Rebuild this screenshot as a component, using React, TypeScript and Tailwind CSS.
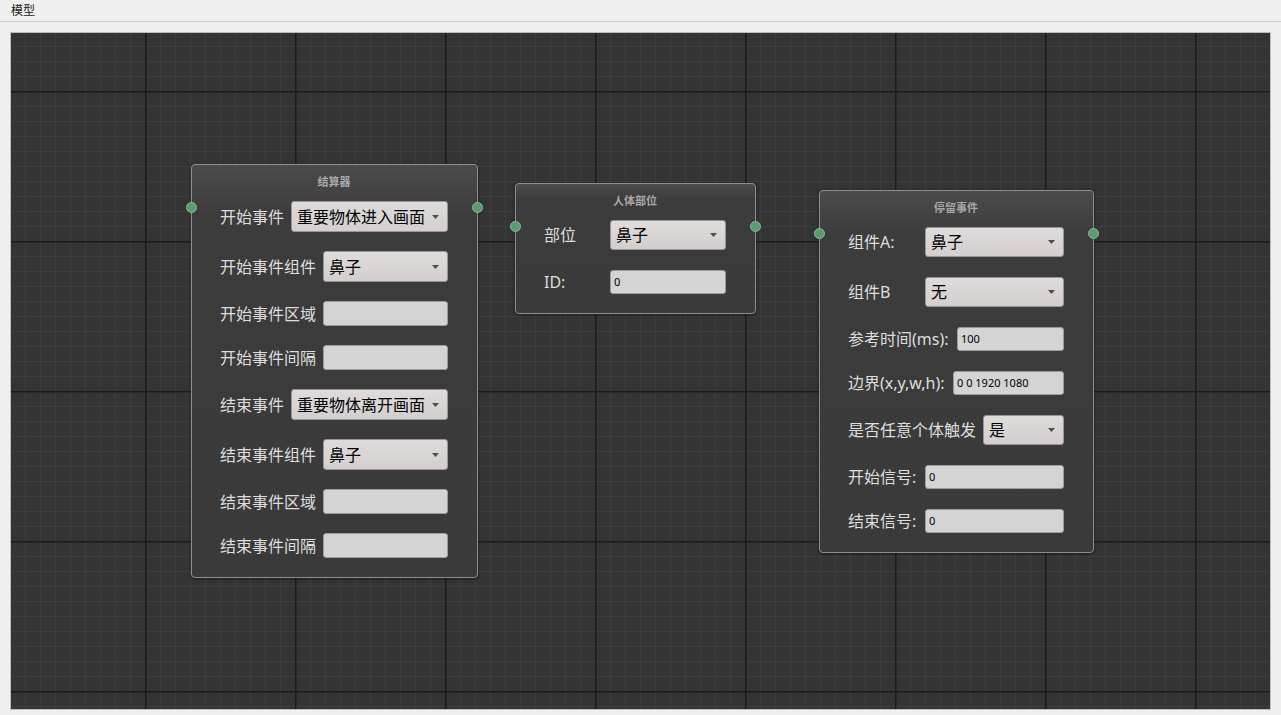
import React from "react";

const FONT = { fontFamily: '"Noto Sans", "Noto Sans CJK SC", sans-serif' };

type Field =
  | { kind: "combo"; label: string; value: string; w: string }
  | { kind: "input"; label: string; value: string; w: string };

type NodeDef = {
  title: string;
  pos: string;
  width: string;
  gap: string;
  comboH: string;
  inputH: string;
  fields: Field[];
};

const nodes: NodeDef[] = [
  {
    title: "结算器",
    pos: "left-[180px] top-[131px]",
    width: "w-[287px]",
    gap: "gap-[19px]",
    comboH: "h-[31px]",
    inputH: "h-[25px]",
    fields: [
      { kind: "combo", label: "开始事件", value: "重要物体进入画面", w: "w-[157px]" },
      { kind: "combo", label: "开始事件组件", value: "鼻子", w: "w-[125px]" },
      { kind: "input", label: "开始事件区域", value: "", w: "w-[125px]" },
      { kind: "input", label: "开始事件间隔", value: "", w: "w-[125px]" },
      { kind: "combo", label: "结束事件", value: "重要物体离开画面", w: "w-[157px]" },
      { kind: "combo", label: "结束事件组件", value: "鼻子", w: "w-[125px]" },
      { kind: "input", label: "结束事件区域", value: "", w: "w-[125px]" },
      { kind: "input", label: "结束事件间隔", value: "", w: "w-[125px]" },
    ],
  },
  {
    title: "人体部位",
    pos: "left-[504px] top-[150px]",
    width: "w-[241px]",
    gap: "gap-[20px]",
    comboH: "h-[30px]",
    inputH: "h-[24px]",
    fields: [
      { kind: "combo", label: "部位", value: "鼻子", w: "w-[116px]" },
      { kind: "input", label: "ID:", value: "0", w: "w-[116px]" },
    ],
  },
  {
    title: "停留事件",
    pos: "left-[808px] top-[157px]",
    width: "w-[275px]",
    gap: "gap-[20px]",
    comboH: "h-[30px]",
    inputH: "h-[24px]",
    fields: [
      { kind: "combo", label: "组件A:", value: "鼻子", w: "w-[139px]" },
      { kind: "combo", label: "组件B", value: "无", w: "w-[139px]" },
      { kind: "input", label: "参考时间(ms):", value: "100", w: "w-[107px]" },
      { kind: "input", label: "边界(x,y,w,h):", value: "0 0 1920 1080", w: "w-[111px]" },
      { kind: "combo", label: "是否任意个体触发", value: "是", w: "w-[81px]" },
      { kind: "input", label: "开始信号:", value: "0", w: "w-[139px]" },
      { kind: "input", label: "结束信号:", value: "0", w: "w-[139px]" },
    ],
  },
];

function Grid() {
  const minor = [];
  for (let i = 15; i < 150; i += 15) {
    minor.push(<line key={"v" + i} x1={i + 0.5} y1={0} x2={i + 0.5} y2={150} stroke="#3d3d3d" strokeWidth={1} />);
    minor.push(<line key={"h" + i} x1={0} y1={i + 0.5} x2={150} y2={i + 0.5} stroke="#3d3d3d" strokeWidth={1} />);
  }
  return (
    <svg className="absolute inset-0 w-full h-full">
      <defs>
        <pattern id="grid" x={134} y={58} width={150} height={150} patternUnits="userSpaceOnUse">
          <rect width={150} height={150} fill="#343434" />
          {minor}
          <line x1={0.75} y1={0} x2={0.75} y2={150} stroke="#1b1b1b" strokeWidth={1.5} />
          <line x1={0} y1={0.75} x2={150} y2={0.75} stroke="#1b1b1b" strokeWidth={1.5} />
        </pattern>
      </defs>
      <rect width="100%" height="100%" fill="url(#grid)" />
    </svg>
  );
}

function Port({ side }: { side: "left" | "right" }) {
  return (
    <div
      className={`absolute top-[37px] w-[11px] h-[11px] rounded-full bg-[#5c9a6f] border border-[#8cb89a] ${
        side === "left" ? "left-[-6px]" : "right-[-6px]"
      }`}
    />
  );
}

function Combo({ value, w, h }: { value: string; w: string; h: string }) {
  return (
    <div
      className={`${w} ${h} relative flex items-center pl-[5px] rounded-[3px] border border-[#9a9696] bg-gradient-to-b from-[#e0dcdc] to-[#d4cece] text-[16px] text-black`}
    >
      {value}
      <svg className="absolute right-[8px] top-1/2 -translate-y-1/2" width="7" height="4" viewBox="0 0 7 4">
        <path d="M0 0 H7 L3.5 4 Z" fill="#4e4e4e" />
      </svg>
    </div>
  );
}

function TextInput({ value, w, h }: { value: string; w: string; h: string }) {
  return (
    <div className={`${w} ${h} flex items-center pl-[3px] rounded-[3px] border border-[#9c9c9c] bg-[#d4d4d4] text-[11px] text-black`}>
      {value}
    </div>
  );
}

function Node({ n }: { n: NodeDef }) {
  return (
    <div
      className={`absolute ${n.pos} ${n.width} rounded-[4px] border border-[#8e8e8e] bg-gradient-to-b from-[#4b4b4b] via-[#3c3c3c] via-[12%] to-[#3a3a3a] shadow-[0_1px_3px_rgba(0,0,0,0.5)] pt-[10px] pb-[19px] pl-[28px] pr-[29px]`}
    >
      <Port side="left" />
      <Port side="right" />
      <div className="h-[14px] leading-[14px] text-center text-[11px] font-bold text-[#a9a9a9] mb-[12px]">{n.title}</div>
      <div className={`flex flex-col ${n.gap}`}>
        {n.fields.map((f) => (
          <div key={f.label} className="flex items-center justify-between">
            <span className="text-[16px] text-[#dedede] whitespace-nowrap">{f.label}</span>
            {f.kind === "combo" ? (
              <Combo value={f.value} w={f.w} h={n.comboH} />
            ) : (
              <TextInput value={f.value} w={f.w} h={n.inputH} />
            )}
          </div>
        ))}
      </div>
    </div>
  );
}

export default function App() {
  return (
    <div className="w-[1281px] h-[715px] bg-[#f0f0f0] flex flex-col overflow-hidden" style={FONT}>
      <div className="h-[22px] flex items-center px-[11px] border-b border-[#cfcfcf] text-[12px] text-[#1a1a1a]">模型</div>
      <div className="flex-1 flex flex-col pt-[10px] px-[10px] pb-[5px]">
        <div className="relative flex-1 border border-[#bcbcbc] overflow-hidden">
          <Grid />
          {nodes.map((n) => (
            <Node key={n.title} n={n} />
          ))}
        </div>
      </div>
    </div>
  );
}
